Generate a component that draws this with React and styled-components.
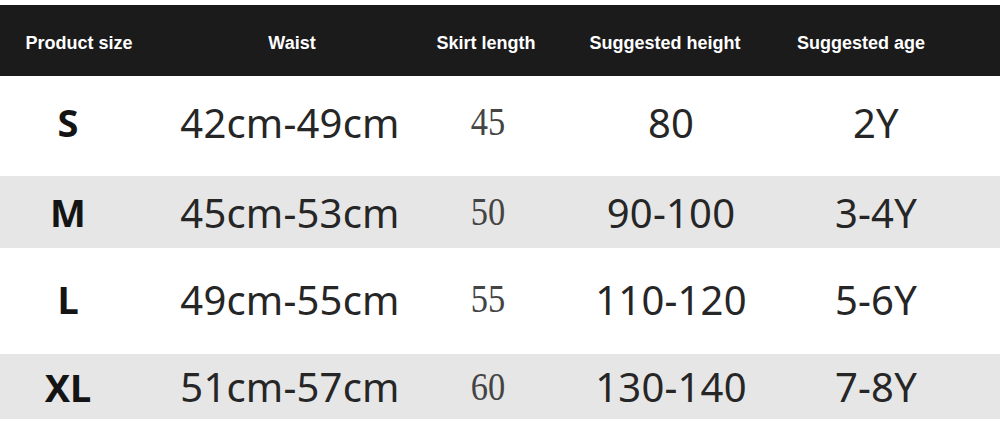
import styled, { createGlobalStyle } from 'styled-components';

const GlobalStyle = createGlobalStyle`
    html, body {
        margin: 0;
        padding: 0;
        background: #ffffff;
    }
`

const Chart = styled.div`
    width: 1001px;
    height: 423px;
    padding-top: 5px;
    box-sizing: border-box;
    background: #ffffff;
    overflow: hidden;
`

const HeaderRow = styled.div`
    display: grid;
    grid-template-columns: 158px 268px 120px 238px 154px 1fr;
    align-items: center;
    height: 71px;
    width: 1000px;
    padding-top: 6px;
    box-sizing: border-box;
    background: #1b1b1b;
`

const HeadCell = styled.div`
    text-align: center;
    color: #ffffff;
    font-family: "Liberation Sans", Arial, sans-serif;
    font-weight: bold;
    font-size: 18px;
    white-space: nowrap;
`

const Row = styled.div`
    display: grid;
    grid-template-columns: 136px 308px 88px 278px 132px 1fr;
    align-items: center;
    height: ${(p) => p.$height}px;
    width: 1000px;
    background: ${(p) => (p.$shaded ? '#e6e6e6' : '#ffffff')};
`

const SizeCell = styled.div`
    text-align: center;
    font-family: "Noto Sans", "Open Sans", sans-serif;
    font-weight: bold;
    font-size: 38px;
    color: #141414;
    padding-bottom: ${(p) => p.$lift}px;
`

const ValueCell = styled.div`
    text-align: center;
    font-family: "Noto Sans", "Open Sans", sans-serif;
    font-size: 40px;
    letter-spacing: 0.2px;
    color: #262626;
    white-space: nowrap;
    padding-bottom: ${(p) => p.$lift}px;
`

const SerifCell = styled.div`
    text-align: center;
    font-family: "Liberation Serif", "Times New Roman", serif;
    font-size: 41px;
    color: #444444;
    transform: scaleX(0.84);
    padding-bottom: ${(p) => p.$lift + 2}px;
`

const headers = ['Product size', 'Waist', 'Skirt length', 'Suggested height', 'Suggested age'];

const rows = [
    { size: 'S', waist: '42cm-49cm', skirt: '45', height: '80', age: '2Y', h: 100, shaded: false, lift: 8 },
    { size: 'M', waist: '45cm-53cm', skirt: '50', height: '90-100', age: '3-4Y', h: 72, shaded: true, lift: 0 },
    { size: 'L', waist: '49cm-55cm', skirt: '55', height: '110-120', age: '5-6Y', h: 106, shaded: false, lift: 4 },
    { size: 'XL', waist: '51cm-57cm', skirt: '60', height: '130-140', age: '7-8Y', h: 65, shaded: true, lift: 0 },
];

export default function App() {
    return (
        <>
            <GlobalStyle />
            <Chart>
                <HeaderRow>
                    {headers.map((h) => (
                        <HeadCell key={h}>{h}</HeadCell>
                    ))}
                </HeaderRow>
                {rows.map((r) => (
                    <Row key={r.size} $height={r.h} $shaded={r.shaded}>
                        <SizeCell $lift={r.lift}>{r.size}</SizeCell>
                        <ValueCell $lift={r.lift}>{r.waist}</ValueCell>
                        <SerifCell $lift={r.lift}>{r.skirt}</SerifCell>
                        <ValueCell $lift={r.lift}>{r.height}</ValueCell>
                        <ValueCell $lift={r.lift}>{r.age}</ValueCell>
                    </Row>
                ))}
            </Chart>
        </>
    );
}
